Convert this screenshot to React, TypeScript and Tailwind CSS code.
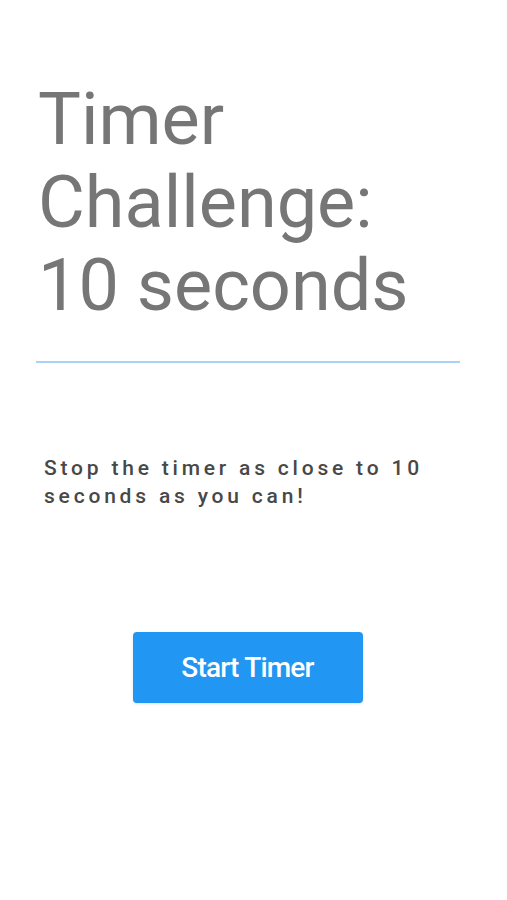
export default function App() {
  return (
    <div className="min-h-[900px] w-full bg-white font-['Roboto',sans-serif]">
      <div className="px-[36px] pt-[78px]">
        <h1 className="pl-[2px] text-[72px] font-normal leading-[83px] text-[#767676]">
          Timer
          <br />
          Challenge:
          <br />
          10 seconds
        </h1>
        <div className="mt-[34px] h-[2px] w-[424px] bg-[#a9d2f5]" />
        <p className="mt-[91px] pl-[8px] text-[21px] font-medium leading-[28px] tracking-[3.8px] text-[#484848]">
          Stop the timer as close to 10
          <br />
          seconds as you can!
        </p>
      </div>
      <div className="mt-[122px] flex justify-center">
        <button className="ml-[-12px] h-[71px] w-[230px] rounded-[4px] bg-[#2196f3] text-[28px] font-medium tracking-[-0.8px] text-white shadow-sm">
          Start Timer
        </button>
      </div>
    </div>
  );
}
